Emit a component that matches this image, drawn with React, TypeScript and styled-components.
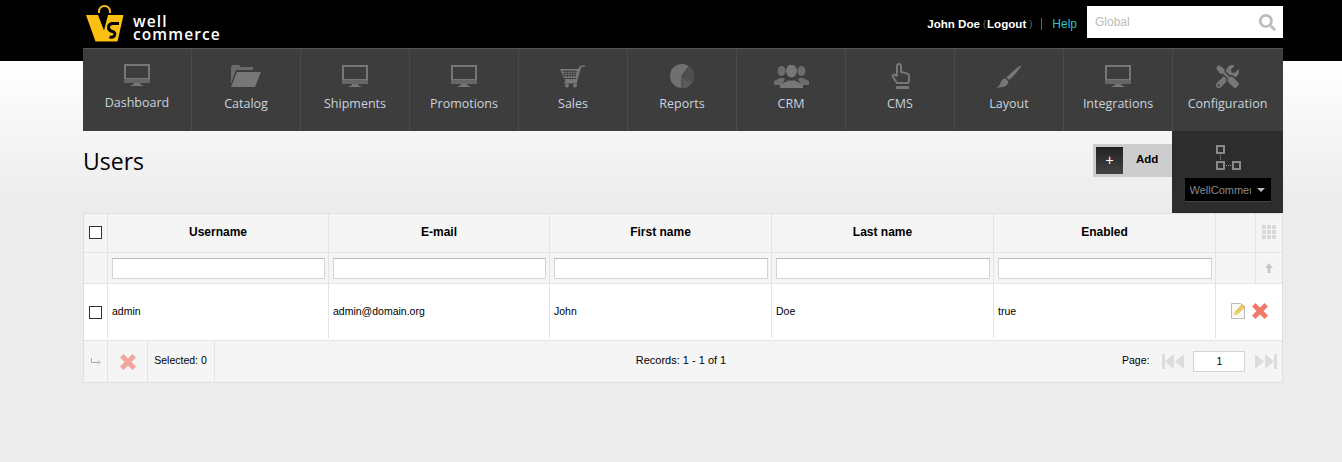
import React from 'react';
import styled, { createGlobalStyle } from 'styled-components';
import { FaTools, FaSearch } from 'react-icons/fa';

const GlobalStyle = createGlobalStyle`
  html, body {
    margin: 0;
    padding: 0;
    height: 100%;
  }
  body {
    min-height: 462px;
    overflow: hidden;
    font-family: "Liberation Sans", Arial, sans-serif;
    font-size: 12px;
    color: #000;
    background: linear-gradient(#000 0, #000 61px, #fff 61px, #ececec 205px, #ececec 100%);
  }
`;

const Page = styled.div`
  width: 1200px;
  margin-left: 83px;
`;

const TopBar = styled.header`
  height: 48px;
  display: flex;
  align-items: flex-start;
`;

const Logo = styled.a`
  display: flex;
  align-items: flex-start;
  gap: 9px;
  margin: 5px 0 0 3px;
`;

const LogoText = styled.div`
  margin-top: 10px;
  font-family: "Open Sans", sans-serif;
  font-weight: 600;
  font-size: 15.5px;
  line-height: 13px;
  letter-spacing: 1.1px;
  color: #fff;
`;

const UserBox = styled.div`
  margin: 16px 10px 0 auto;
  display: flex;
  align-items: center;
  color: #fff;
  font-size: 11.6px;
  line-height: 14px;
`;

const UserName = styled.b`
  font-weight: 700;
`;

const Paren = styled.span`
  color: #777;
  font-size: 9px;
  margin: 1px 1px 0 3px;
`;

const HelpLink = styled.a`
  color: #2fc0c0;
  margin-left: 8px;
  padding-left: 10px;
  border-left: 1px solid #666;
  line-height: 12px;
  font-size: 12px;
`;

const SearchBox = styled.div`
  width: 196px;
  height: 32px;
  margin-top: 6px;
  background: #fff;
  box-sizing: border-box;
  padding: 0 7px 0 8px;
  display: flex;
  align-items: center;
  justify-content: space-between;
  color: #bbb;
  font-size: 12px;
`;

const Nav = styled.nav`
  height: 83px;
  box-sizing: border-box;
  display: flex;
  background: #3d3d3d;
  border-top: 1px solid #555;
`;

const NavItem = styled.a<{ $first?: boolean }>`
  width: 109px;
  box-sizing: border-box;
  border-right: 1px solid #4a4a4a;
  display: flex;
  flex-direction: column;
  align-items: center;
  padding-top: ${p => (p.$first ? 14 : 15)}px;
  color: #c9d3dc;
  font-family: "Open Sans", sans-serif;
  font-size: 12.5px;
  line-height: 17px;

  &:last-child {
    border-right: 0;
  }
`;

const NavIcon = styled.div`
  width: 40px;
  height: 24px;
  margin-bottom: 7px;
  display: flex;
  align-items: center;
  justify-content: center;
  color: #777;
`;

const TitleRow = styled.div`
  height: 82px;
  display: flex;
  align-items: flex-start;
`;

const Title = styled.h1`
  margin: 16px 0 0;
  font-family: "Open Sans", sans-serif;
  font-weight: 400;
  font-size: 23px;
  line-height: 28px;
  color: #000;
`;

const AddButton = styled.a`
  margin: 13px 0 0 auto;
  width: 79px;
  height: 33px;
  box-sizing: border-box;
  padding: 3px;
  background: #cdcdcd;
  display: flex;
  font-weight: 700;
  font-size: 11.5px;
`;

const AddIcon = styled.span`
  width: 27px;
  height: 27px;
  background: linear-gradient(#222, #444);
  color: #fff;
  font-weight: 400;
  font-size: 14px;
  line-height: 26px;
  text-align: center;
`;

const AddLabel = styled.span`
  margin-left: 13px;
  line-height: 24px;
`;

const StorePanel = styled.div`
  width: 111px;
  height: 82px;
  box-sizing: border-box;
  padding-top: 14px;
  background: #2d2d2d;
  display: flex;
  flex-direction: column;
  align-items: center;
`;

const StoreSelect = styled.div`
  width: 86px;
  height: 24px;
  margin-top: 7px;
  box-sizing: border-box;
  padding: 0 5px;
  background: #000;
  border-bottom: 1px solid #444;
  display: flex;
  align-items: center;
  color: #8a8a8a;
  font-size: 11px;
`;

const StoreName = styled.span`
  width: 61px;
  overflow: hidden;
  white-space: nowrap;
`;

const Caret = styled.span`
  margin-left: 6px;
  border-left: 4px solid transparent;
  border-right: 4px solid transparent;
  border-top: 4px solid #bbb;
`;

const Grid = styled.div`
  width: 1200px;
  box-sizing: border-box;
  border: 1px solid #e0e0e0;
`;

const COLUMNS = '24px 221px 221px 222px 222px 222px 40px 26px';

const Row = styled.div<{ $height: number; $white?: boolean }>`
  display: grid;
  grid-template-columns: ${COLUMNS};
  height: ${p => p.$height}px;
  box-sizing: border-box;
  border-bottom: 1px solid #e4e4e4;
  background: ${p => (p.$white ? '#fff' : '#f5f5f5')};
`;

const Cell = styled.div<{ $center?: boolean }>`
  box-sizing: border-box;
  border-right: 1px solid #e4e4e4;
  display: flex;
  align-items: center;
  justify-content: ${p => (p.$center ? 'center' : 'flex-start')};
  padding: 0 ${p => (p.$center ? 0 : 3)}px 0 ${p => (p.$center ? 0 : 4)}px;
  font-size: 10.5px;

  &:last-child {
    border-right: 0;
  }
`;

const HeadCell = styled(Cell)`
  padding-bottom: 2px;
  font-size: 12px;
  font-weight: 700;
`;

const DataCell = styled(Cell)`
  height: 54px;
`;

const ActionCell = styled(DataCell)`
  grid-column: span 2;
  border-right: 0;
`;

const Check = styled.span`
  width: 13px;
  height: 13px;
  box-sizing: border-box;
  border: 1px solid #333;
  background: #fff;
`;

const RowCheck = styled(Check)`
  margin-top: 2px;
`;

const FilterInput = styled.input`
  width: 100%;
  height: 21px;
  box-sizing: border-box;
  border: 1px solid #d4d4d4;
  border-top-color: #bbb;
  background: #fff;
  padding: 0;
`;

const Footer = styled.div`
  height: 41px;
  display: flex;
  background: #f5f5f5;
  font-size: 10.5px;
`;

const FooterCell = styled.div<{ $width: number }>`
  width: ${p => p.$width}px;
  box-sizing: border-box;
  border-right: 1px solid #e4e4e4;
  display: flex;
  align-items: center;
  justify-content: center;
`;

const Selected = styled(FooterCell)`
  padding: 0 1px 3px 0;
`;

const Records = styled.div`
  width: 907px;
  box-sizing: border-box;
  padding: 0 0 3px 25px;
  display: flex;
  align-items: center;
  justify-content: center;
  font-size: 11px;
`;

const Pager = styled.div`
  flex: 1;
  display: flex;
  align-items: center;
  padding-bottom: 1px;
`;

const PageLabel = styled.span`
  margin: 0 13px 2px 0;
`;

const PageInput = styled.input`
  width: 52px;
  height: 21px;
  box-sizing: border-box;
  margin: 0 9px 0 8px;
  border: 1px solid #d4d4d4;
  background: #fff;
  padding: 0;
  text-align: center;
  font: 10.5px "Liberation Sans", Arial, sans-serif;
  color: #000;
`;

const ActionIcons = styled.div`
  display: flex;
  align-items: center;
  gap: 6px;
  margin-left: 11px;
`;

const Monitor = () => (
  <svg width="26" height="22" viewBox="0 0 26 22">
    <path fillRule="evenodd" fill="#777" d="M0 0h26v16H0zM2 2v12h22V2z" />
    <rect y="15" width="26" height="4" fill="#666" />
    <path d="M10 19h6l.5 1.500 3 1V22H6.500v-.500l3-1z" fill="#777" />
  </svg>
);

const FolderIcon = () => (
  <svg width="30" height="22" viewBox="0 0 30 22" fill="#777">
    <path d="M0 22V2l1-2h7l2 2h12v3H5L0 19z" fill="#6a6a6a" />
    <path d="M6 7h24l-6 15H0z" />
  </svg>
);

const CartIcon = () => (
  <svg width="26" height="23" viewBox="0 0 26 23" fill="#777">
    <path d="M0 4h18l2-3 5-1v1.500l-4 1L17 17H5.500L4.500 14H16l.3-1H4z" />
    <circle cx="7" cy="20.500" r="2" />
    <circle cx="15" cy="20.500" r="2" />
    <path d="M4 17h13v1.500H4z" />
    <path
      d="M2 6.500h15M2.500 8.500h14M3 10.500h13M5 5v7M7.500 5v7M10 5v7M12.500 5v7M15 5v7"
      stroke="#3d3d3d"
      strokeWidth=".8"
    />
  </svg>
);

const PieIcon = () => (
  <svg width="24" height="24" viewBox="0 0 24 24">
    <circle cx="12" cy="12" r="12" fill="#707070" />
    <path d="M12 12 L19 2.300 A12 12 0 0 1 22 19 Z" fill="#4f4f4f" />
    <path d="M12 12 L21 20 A12 12 0 0 1 12 24 Z" fill="#5c5c5c" />
    <path d="M12 12 L19 2.300 M12 12 L21 20 M12 12 V24" stroke="#3d3d3d" strokeWidth=".8" />
  </svg>
);

const UsersIcon = () => (
  <svg width="35" height="23" viewBox="0 0 35 23" fill="#777">
    <ellipse cx="7.500" cy="6" rx="4" ry="5" fill="#6c6c6c" />
    <path d="M0 18v-2l6-3h3l2 1-3 6H0z" fill="#6c6c6c" />
    <ellipse cx="27.500" cy="6" rx="4" ry="5" fill="#6c6c6c" />
    <path d="M35 18v-2l-6-3h-3l-2 1 3 6h8z" fill="#6c6c6c" />
    <ellipse cx="17.500" cy="6" rx="5.500" ry="6.500" />
    <path d="M6 23v-3l8-4.500h7l8 4.500v3z" />
  </svg>
);

const HandIcon = () => (
  <svg width="21" height="26" viewBox="0 0 21 26" fill="none" stroke="#777" strokeWidth="2">
    <path d="M7 13V3a2 2 0 0 1 4 0v6l6 1.500c1 .3 2 1 2 2.500v5l-1 2H7l-4-6c-1-2 1-3.500 3-1.500l1 1" />
    <rect x="6" y="23" width="13" height="3" fill="#777" stroke="none" />
  </svg>
);

const BrushIcon = () => (
  <svg width="26" height="23" viewBox="0 0 26 23" fill="#777">
    <path d="M26 0c-3 5-8 11-13 15l-2.500-2.500C15 8 21 2 26 0z" />
    <path d="M9.500 13.500l3 3c-.5 2.500-1.500 4-4 5-2.500.8-6 1.200-8.500 1 2.500-1 4-2.500 4.500-4.500.5-2.500 2.500-4.500 5-4.500z" />
  </svg>
);

const StoreTree = () => (
  <svg width="27" height="26" viewBox="0 0 27 26" fill="none" stroke="#8a8a8a">
    <rect x="3" y="1" width="7" height="7" strokeWidth="2" />
    <rect x="3" y="17" width="7" height="7" strokeWidth="2" />
    <rect x="19" y="17" width="7" height="7" strokeWidth="2" />
    <path d="M6.500 10v6M12 20.500h6" strokeDasharray="1 1" strokeWidth="1" />
  </svg>
);

const GridGlyph = () => (
  <svg width="15" height="15" viewBox="0 0 15 15" fill="#d8d8d8">
    {[0, 5, 10].flatMap(y =>
      [0, 5, 10].map(x => <rect key={`${x}-${y}`} x={x} y={y} width="4" height="4" />)
    )}
  </svg>
);

const UpArrow = () => (
  <svg width="8" height="10" viewBox="0 0 8 10" fill="#c8c8c8">
    <path d="M4 0 8 5H5.500v5h-3V5H0z" />
  </svg>
);

const CrossIcon = ({ faded }: { faded?: boolean }) => (
  <svg width="16" height="16" viewBox="0 0 16 16" fill={faded ? '#f2a59c' : '#f0796b'}>
    <path d="M3.500 0 8 4.500 12.500 0 16 3.500 11.500 8 16 12.500 12.500 16 8 11.500 3.500 16 0 12.500 4.500 8 0 3.500z" />
  </svg>
);

const EditIcon = () => (
  <svg width="15" height="16" viewBox="0 0 15 16">
    <path d="M.500.500h9l4 3v12h-13z" fill="#fbfbf6" stroke="#bbb" />
    <path d="M3 12l1-3 7-7.500 3 2.500-7.500 7z" fill="#f2c96a" stroke="#dca94a" strokeWidth=".6" />
    <path d="M3 12l1-3 2.500 2z" fill="#f3dcb4" />
  </svg>
);

const ReturnArrow = () => (
  <svg width="10" height="8" viewBox="0 0 10 8" fill="none" stroke="#aaa">
    <path d="M.500 0v4.500H8" />
    <path d="M7 2.500 9 4.500 7 6.500" />
  </svg>
);

const PagerArrows = ({ flip }: { flip?: boolean }) => (
  <svg
    width="23"
    height="17"
    viewBox="0 0 23 17"
    fill="#dcdcdc"
    style={{ transform: flip ? 'scaleX(-1)' : undefined }}
  >
    <rect x="0" y="1" width="3" height="15" />
    <path d="M3 8.500 12 1v15zM13 8.500 22 1v15z" />
  </svg>
);

const LogoMark = () => (
  <svg width="38" height="37" viewBox="0 0 38 37">
    <path d="M13 8V6.500C13 3 15.500 1 18.500 1S24 3 24 6.500V8" fill="none" stroke="#fdc010" strokeWidth="2" />
    <path d="M0 10h12l6 15.500L22 10h15.500l-6 26.500H9.500z" fill="#fdc010" />
    <path d="M33 18.500h-6c-3 0-4.500 1.500-4.500 4s2 3.500 4 4 3 2 2 4-3 2-5 1.500" fill="none" stroke="#000" strokeWidth="3" />
  </svg>
);

const navItems: { label: string; icon: React.ReactNode }[] = [
  { label: 'Dashboard', icon: <Monitor /> },
  { label: 'Catalog', icon: <FolderIcon /> },
  { label: 'Shipments', icon: <Monitor /> },
  { label: 'Promotions', icon: <Monitor /> },
  { label: 'Sales', icon: <CartIcon /> },
  { label: 'Reports', icon: <PieIcon /> },
  { label: 'CRM', icon: <UsersIcon /> },
  { label: 'CMS', icon: <HandIcon /> },
  { label: 'Layout', icon: <BrushIcon /> },
  { label: 'Integrations', icon: <Monitor /> },
  { label: 'Configuration', icon: <FaTools size={23} /> },
];

const columns = ['Username', 'E-mail', 'First name', 'Last name', 'Enabled'];
const user = ['admin', 'admin@domain.org', 'John', 'Doe', 'true'];

export default function App() {
  return (
    <Page>
      <GlobalStyle />
      <TopBar>
        <Logo>
          <LogoMark />
          <LogoText>
            well
            <br />
            commerce
          </LogoText>
        </Logo>
        <UserBox>
          <UserName>John Doe</UserName>
          <Paren>(</Paren>
          <UserName>Logout</UserName>
          <Paren>)</Paren>
          <HelpLink>Help</HelpLink>
        </UserBox>
        <SearchBox>
          Global
          <FaSearch size={17} color="#bdbdbd" />
        </SearchBox>
      </TopBar>

      <Nav>
        {navItems.map((item, index) => (
          <NavItem key={item.label} $first={index === 0}>
            <NavIcon>{item.icon}</NavIcon>
            {item.label}
          </NavItem>
        ))}
      </Nav>

      <TitleRow>
        <Title>Users</Title>
        <AddButton>
          <AddIcon>+</AddIcon>
          <AddLabel>Add</AddLabel>
        </AddButton>
        <StorePanel>
          <StoreTree />
          <StoreSelect>
            <StoreName>WellCommerce</StoreName>
            <Caret />
          </StoreSelect>
        </StorePanel>
      </TitleRow>

      <Grid>
        <Row $height={39}>
          <HeadCell $center>
            <Check />
          </HeadCell>
          {columns.map(name => (
            <HeadCell key={name} $center>
              {name}
            </HeadCell>
          ))}
          <HeadCell />
          <HeadCell $center>
            <GridGlyph />
          </HeadCell>
        </Row>
        <Row $height={31}>
          <Cell />
          {columns.map(name => (
            <Cell key={name}>
              <FilterInput />
            </Cell>
          ))}
          <Cell />
          <Cell $center>
            <UpArrow />
          </Cell>
        </Row>
        <Row $height={57} $white>
          <DataCell $center>
            <RowCheck />
          </DataCell>
          {user.map(value => (
            <DataCell key={value}>{value}</DataCell>
          ))}
          <ActionCell>
            <ActionIcons>
              <EditIcon />
              <CrossIcon />
            </ActionIcons>
          </ActionCell>
        </Row>
        <Footer>
          <FooterCell $width={24}>
            <ReturnArrow />
          </FooterCell>
          <FooterCell $width={40}>
            <CrossIcon faded />
          </FooterCell>
          <Selected $width={67}>Selected: 0</Selected>
          <Records>Records: 1 - 1 of 1</Records>
          <Pager>
            <PageLabel>Page:</PageLabel>
            <PagerArrows />
            <PageInput defaultValue="1" />
            <PagerArrows flip />
          </Pager>
        </Footer>
      </Grid>
    </Page>
  );
}
